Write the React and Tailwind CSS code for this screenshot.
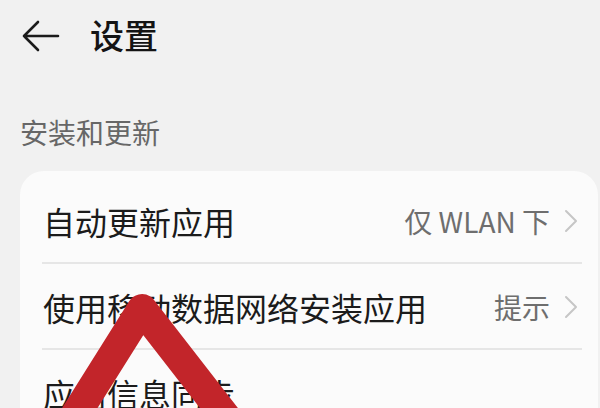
import React from 'react';

const rows = [
  { label: '自动更新应用', value: '仅 WLAN 下' },
  { label: '使用移动数据网络安装应用', value: '提示' },
  { label: '应用信息同步', value: '' },
];

const Chevron = () => (
  <svg width="14" height="24" viewBox="0 0 14 24" className="ml-[14px] shrink-0">
    <path d="M2 2 L12 12 L2 22" fill="none" stroke="#c6c6c6" strokeWidth="2" strokeLinecap="round" strokeLinejoin="round" />
  </svg>
);

const SettingRow = ({ label, value, last }) => (
  <div className="relative flex h-[86px] items-center pl-[23px] pr-[20px]">
    <span className="flex-1 whitespace-nowrap text-[32px] leading-none text-[#1b1b1b]">{label}</span>
    {value && (
      <>
        <span className="whitespace-nowrap text-[28px] leading-none text-[#6e6e6e]">{value}</span>
        <Chevron />
      </>
    )}
    {!last && <div className="absolute bottom-0 left-[22px] right-[16px] h-[2px] bg-[#e6e6e6]" />}
  </div>
);

const App = () => {
  return (
    <div
      className="relative h-[408px] w-[600px] overflow-hidden bg-[#f1f1f1]"
      style={{ fontFamily: '"Noto Sans CJK SC", "Noto Sans", sans-serif' }}
    >
      {/* header */}
      <div className="flex h-[72px] items-center pl-[22px]">
        <svg width="38" height="32" viewBox="0 0 38 32">
          <path d="M36 16 H2 M16 2 L2 16 L16 30" fill="none" stroke="#1b1b1b" strokeWidth="2.6" strokeLinecap="round" strokeLinejoin="round" />
        </svg>
        <h1 className="ml-[30px] mb-[2px] text-[34px] font-medium leading-none text-[#141414]">设置</h1>
      </div>

      {/* section */}
      <div className="mt-[46px] pl-5 text-[28px] leading-none text-[#676767]">安装和更新</div>

      <div className="ml-5 mr-[2px] mt-[25px] rounded-[24px] bg-[#fbfbfb] pt-[7px]">
        {rows.map((r, i) => (
          <SettingRow key={r.label} label={r.label} value={r.value} last={i === rows.length - 1} />
        ))}
      </div>

      {/* red annotation mark */}
      <svg className="pointer-events-none absolute left-0 top-0" width="600" height="408" viewBox="0 0 600 408">
        <polyline points="66,430 142,309 236,430" fill="none" stroke="#c2252a" strokeWidth="30" strokeLinejoin="round" />
      </svg>
    </div>
  );
};

export default App;
